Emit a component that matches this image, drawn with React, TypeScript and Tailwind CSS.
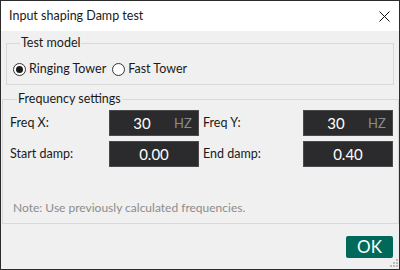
const font = { fontFamily: '"Segoe UI", Lato, "Noto Sans", sans-serif' };

const ValueBox = ({ value, unit }: { value: string; unit?: string }) => {
  return (
    <div className="w-[90px] h-[26px] bg-[#2b2b2d] border border-[#4a4a4c] flex items-center text-white">
      {unit ? (
        <>
          <span className="w-[64px] text-center text-[15px] leading-none">{value}</span>
          <span className="text-[13px] text-[#8a8a8a] leading-none">{unit}</span>
        </>
      ) : (
        <span className="flex-1 text-center text-[15px] leading-none">{value}</span>
      )}
    </div>
  );
};

const Radio = ({ checked, label }: { checked?: boolean; label: string }) => {
  return (
    <label className="flex items-center gap-[3px]">
      <span className="w-[13px] h-[13px] rounded-full border border-[#333] bg-white flex items-center justify-center">
        {checked && <span className="w-[7px] h-[7px] rounded-full bg-[#1a1a1a]" />}
      </span>
      <span>{label}</span>
    </label>
  );
};

const App = () => {
  return (
    <div className="w-[400px] h-[270px] border border-[#2b2b2b] bg-[#f0f0f0] flex flex-col text-[12.5px] text-[#1a1a1a]" style={font}>
      <div className="h-[30px] bg-white flex items-center justify-between pl-[8px] pr-[9px] shrink-0">
        <span>Input shaping Damp test</span>
        <svg width="11" height="11" viewBox="0 0 11 11">
          <path d="M0.5 0.5 L10.5 10.5 M10.5 0.5 L0.5 10.5" stroke="#111" strokeWidth="1" />
        </svg>
      </div>

      <fieldset className="mx-[5px] mt-[4px] border border-[#d9d9d9] h-[50px] pl-[6px]">
        <legend className="ml-[7px] px-[1px] leading-[16px]">Test model</legend>
        <div className="flex items-center gap-[6px] mt-[9px]">
          <Radio checked label="Ringing Tower" />
          <Radio label="Fast Tower" />
        </div>
      </fieldset>

      <fieldset className="mx-[1px] mt-[6px] border border-[#d9d9d9] h-[133px] pl-[7px] pr-[5px]">
        <legend className="ml-[7px] px-[1px] leading-[16px]">Frequency settings</legend>
        <div className="grid grid-cols-[99px_90px_104px_90px] items-center gap-y-[5px] mt-[3px]">
          <span>Freq X:</span>
          <ValueBox value="30" unit="HZ" />
          <span className="pl-[4px]">Freq Y:</span>
          <ValueBox value="30" unit="HZ" />
          <span>Start damp:</span>
          <ValueBox value="0.00" />
          <span className="pl-[4px]">End damp:</span>
          <ValueBox value="0.40" />
        </div>
        <div className="mt-[32px] pl-[3px] text-[12px] text-[#8c8c8c]">Note: Use previously calculated frequencies.</div>
      </fieldset>

      <div className="flex-1 flex items-center justify-end pr-[6px] relative">
        <button className="w-[47px] h-[22px] bg-[#00695a] text-white text-[17px] leading-none rounded-[2px] flex items-center justify-center">OK</button>
        <div className="absolute right-[1px] bottom-[2px] grid grid-cols-3 gap-[1px]">
          <span />
          <span />
          <span className="w-[2px] h-[2px] bg-[#bbb]" />
          <span />
          <span className="w-[2px] h-[2px] bg-[#bbb]" />
          <span className="w-[2px] h-[2px] bg-[#bbb]" />
          <span className="w-[2px] h-[2px] bg-[#bbb]" />
          <span className="w-[2px] h-[2px] bg-[#bbb]" />
          <span className="w-[2px] h-[2px] bg-[#bbb]" />
        </div>
      </div>
    </div>
  );
};

export default App;
